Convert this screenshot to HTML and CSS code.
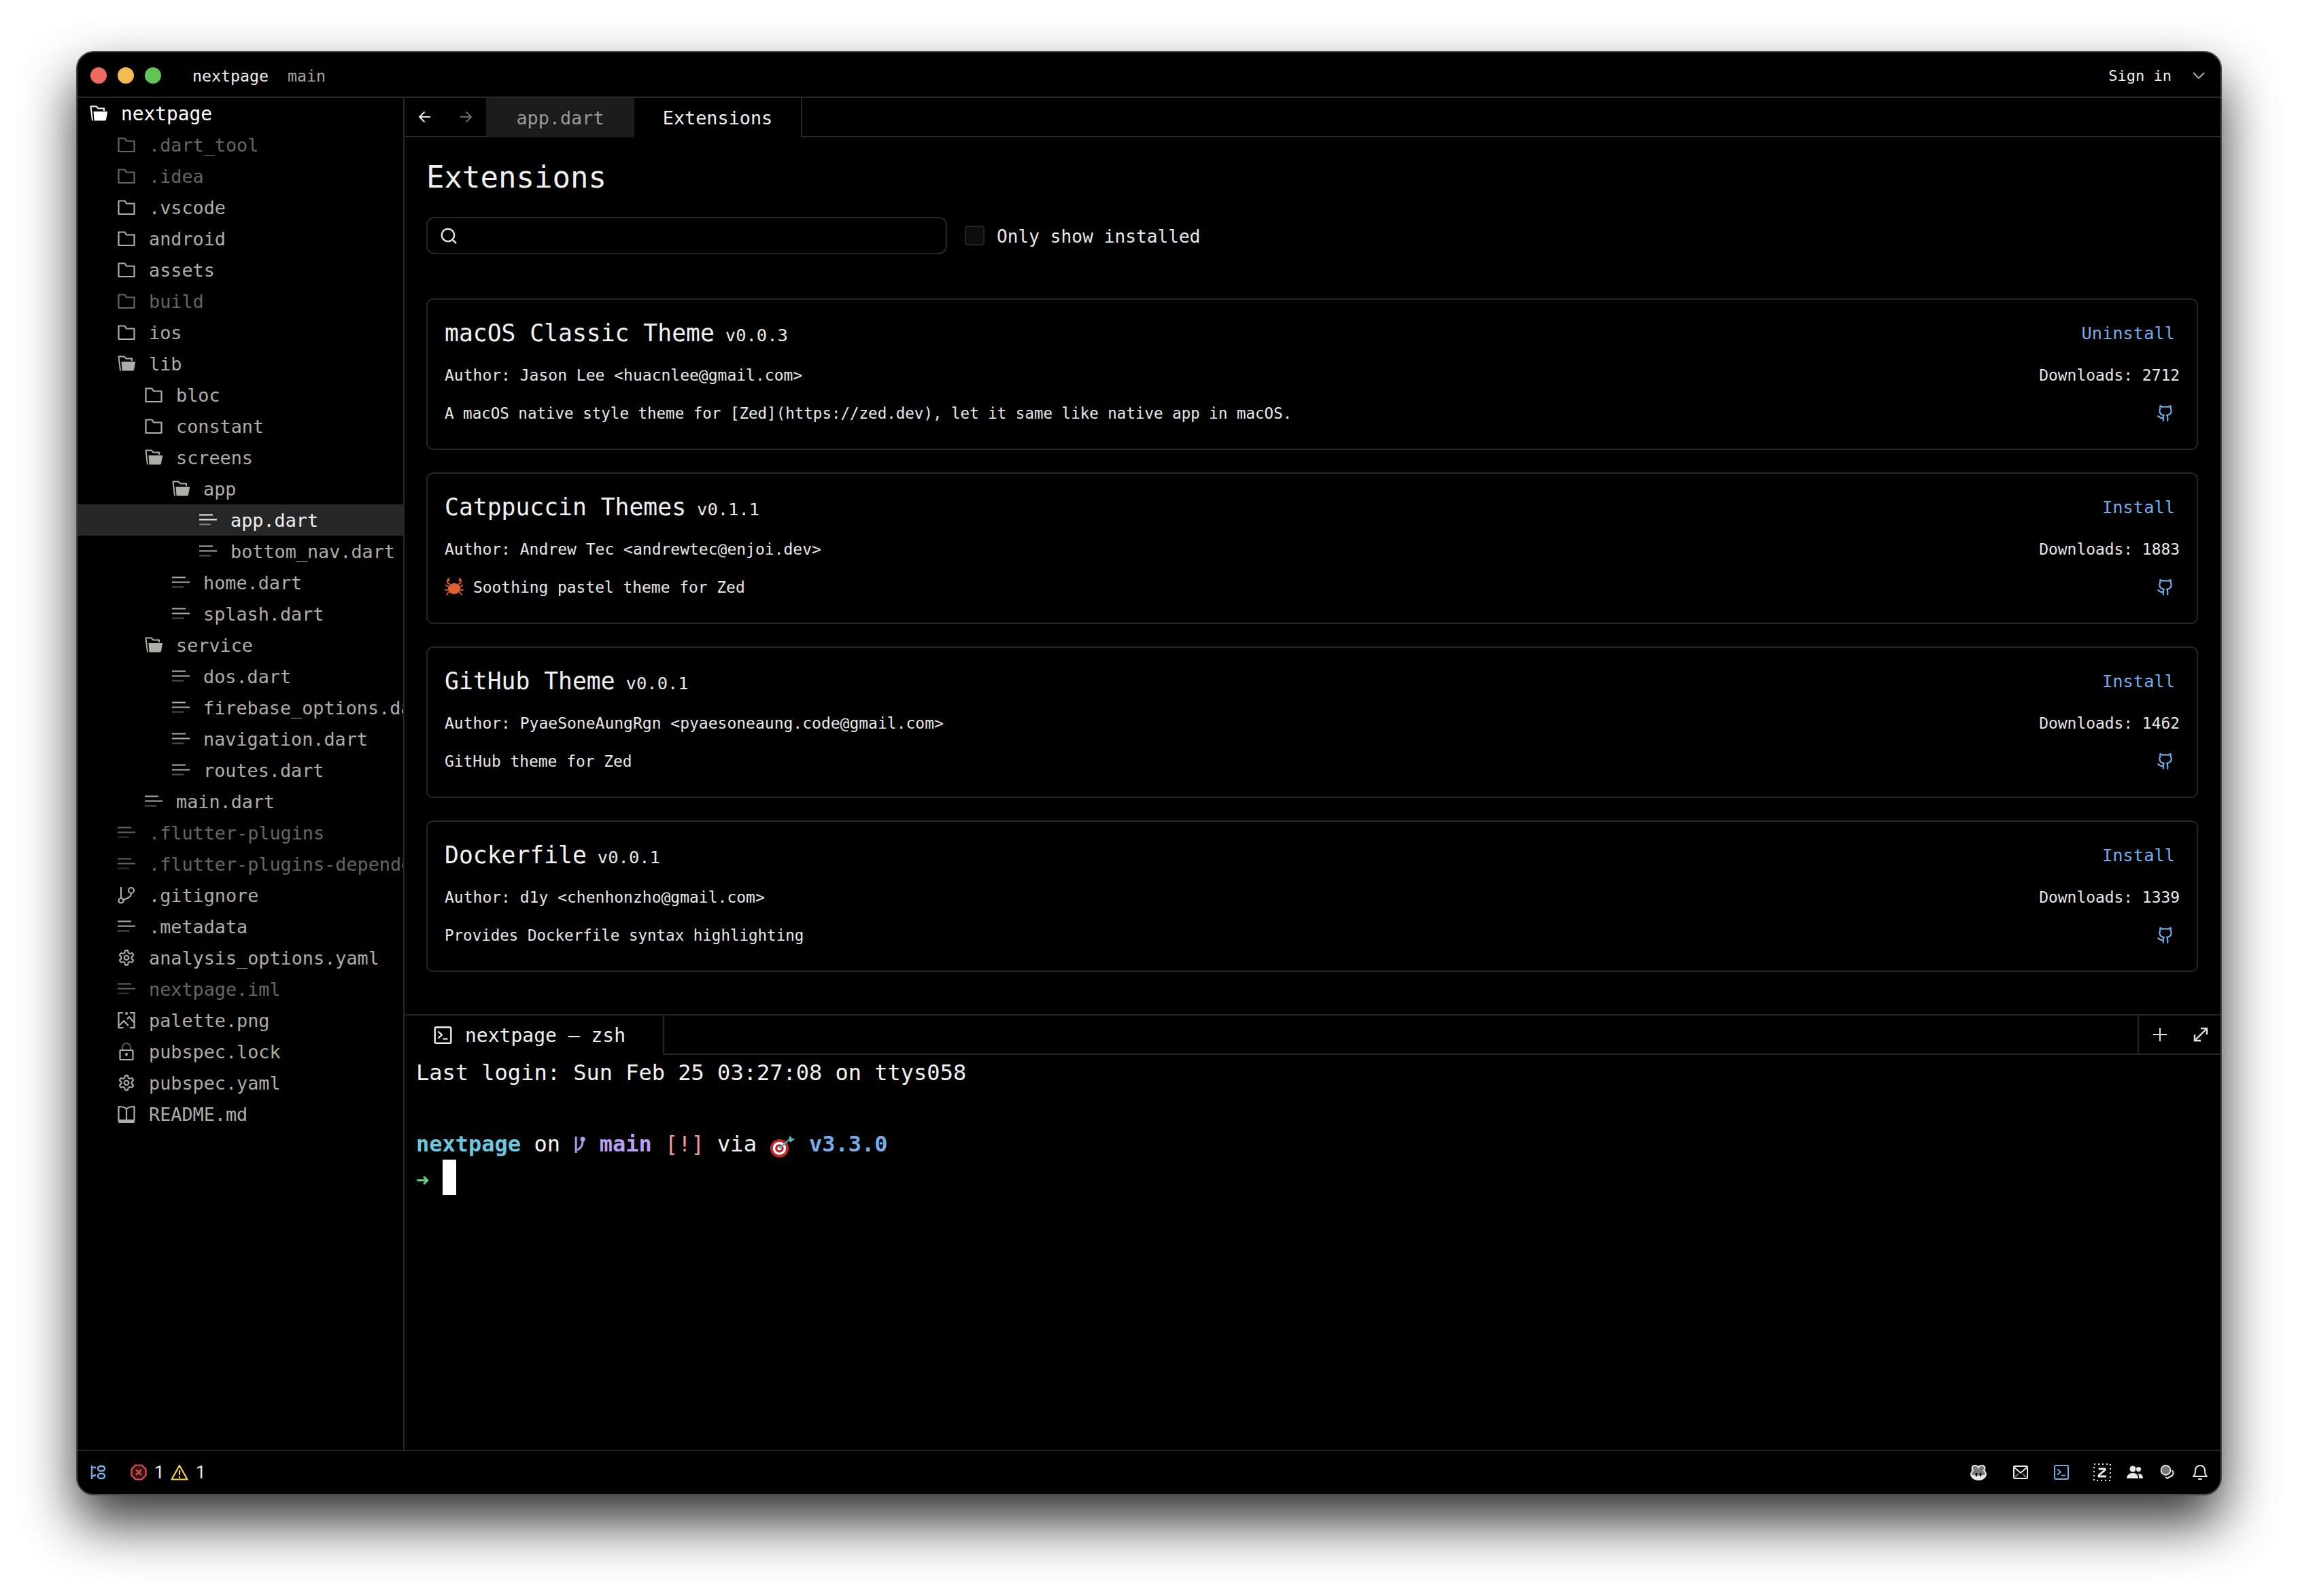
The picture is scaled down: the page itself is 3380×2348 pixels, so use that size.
FILE: index.html
```html
<!DOCTYPE html>
<html lang="en">
<head>
<meta charset="utf-8">
<title>nextpage</title>
<link rel="stylesheet" href="styles.css">
</head>
<body>
<svg class="defs" width="0" height="0" aria-hidden="true">
  <symbol id="i-folder" viewBox="0 0 26 26"><path d="M1.5 3.5h9l2.5 4h11.500v15.500H1.500z" fill="none" stroke="currentColor" stroke-width="2.200" stroke-linejoin="round"/></symbol>
  <symbol id="i-open" viewBox="0 0 26 26"><path d="M4 23.500 1.500 2.500h8l3 3h8.500v3.500" fill="none" stroke="currentColor" stroke-width="2" stroke-linejoin="round"/><path d="M5.500 10h19.500q1.500 0 1 1.500l-2 10.500q-.3 1.500-2 1.500H6.500z" fill="currentColor"/></symbol>
  <symbol id="i-file" viewBox="0 0 26 26"><path d="M0 5.500h20M0 12.500h26" fill="none" stroke="currentColor" stroke-width="2.200"/><path d="M0 19.500h17" fill="none" stroke="currentColor" stroke-opacity=".45" stroke-width="2.200"/></symbol>
  <symbol id="i-gear" viewBox="0 0 24 24"><g fill="none" stroke="currentColor" stroke-width="2" stroke-linejoin="round"><path d="M12.220 2h-.44a2 2 0 0 0-2 2v.18a2 2 0 0 1-1 1.730l-.43.25a2 2 0 0 1-2 0l-.15-.08a2 2 0 0 0-2.730.73l-.22.38a2 2 0 0 0 .73 2.730l.15.1a2 2 0 0 1 1 1.720v.51a2 2 0 0 1-1 1.740l-.15.09a2 2 0 0 0-.73 2.730l.22.38a2 2 0 0 0 2.730.73l.15-.08a2 2 0 0 1 2 0l.43.25a2 2 0 0 1 1 1.730V20a2 2 0 0 0 2 2h.44a2 2 0 0 0 2-2v-.18a2 2 0 0 1 1-1.730l.43-.25a2 2 0 0 1 2 0l.15.08a2 2 0 0 0 2.730-.73l.22-.39a2 2 0 0 0-.73-2.730l-.15-.08a2 2 0 0 1-1-1.740v-.5a2 2 0 0 1 1-1.740l.15-.09a2 2 0 0 0 .73-2.730l-.22-.38a2 2 0 0 0-2.730-.73l-.15.08a2 2 0 0 1-2 0l-.43-.25a2 2 0 0 1-1-1.730V4a2 2 0 0 0-2-2z"/><circle cx="12" cy="12" r="3"/></g></symbol>
  <symbol id="i-git" viewBox="0 0 26 26"><g fill="none" stroke="currentColor" stroke-width="2.200"><circle cx="5" cy="21" r="3.500"/><circle cx="20" cy="6" r="4"/><path d="M5 17.500V1M20 10c0 6-7 8-12 10"/></g></symbol>
  <symbol id="i-image" viewBox="0 0 26 26"><g fill="none" stroke="currentColor" stroke-width="2.200"><path d="M8 2H1.500v22h7M18 2h6.500v22H18"/><path d="M2 21l7-7 7 7M14 11l3-3 7 8"/></g><circle cx="13" cy="3" r="2" fill="currentColor"/></symbol>
  <symbol id="i-lock" viewBox="0 0 26 26"><path d="M7 11V7a6 6 0 0 1 12 0v4" fill="none" stroke="currentColor" stroke-opacity=".5" stroke-width="2.200"/><rect x="3.500" y="11" width="19" height="14" rx="1.500" fill="none" stroke="currentColor" stroke-width="2.200"/><circle cx="13" cy="17" r="2" fill="currentColor"/><path d="M13 17v3" stroke="currentColor" stroke-width="1.500"/></symbol>
  <symbol id="i-book" viewBox="0 0 26 26"><path d="M13 5.500C11 3 7 2 1.500 2v20c5 0 9 .5 11.500 2 2.500-1.500 6.500-2 11.500-2V2C19 2 15 3 13 5.500zM13 5.500V23" fill="none" stroke="currentColor" stroke-width="2.200" stroke-linejoin="round"/><path d="M1 21h24v3.500q0 1.500-1.500 1.500h-21Q1 26 1 24.500z" fill="currentColor"/></symbol>
  <symbol id="i-gh" viewBox="0 0 24 24"><g fill="none" stroke="currentColor" stroke-width="2" stroke-linecap="round" stroke-linejoin="round"><path d="M15 22v-4a4.800 4.800 0 0 0-1-3.500c3 0 6-2 6-5.500.08-1.250-.27-2.480-1-3.500.28-1.150.28-2.350 0-3.500 0 0-1 0-3 1.500-2.640-.5-5.360-.5-8 0C6 2 5 2 5 2c-.3 1.150-.3 2.350 0 3.500A5.403 5.403 0 0 0 4 9c0 3.500 3 5.500 6 5.500-.39.49-.68 1.050-.85 1.650-.17.6-.22 1.230-.15 1.850v4"/><path d="M9 18c-4.510 2-5-2-7-2"/></g></symbol>
  <symbol id="i-term" viewBox="0 0 26 26"><rect x="1.200" y="1.200" width="23.600" height="23.600" rx="2" fill="none" stroke="currentColor" stroke-width="2.400"/><path d="M6 7.500l5.500 5-5.500 5" fill="none" stroke="currentColor" stroke-width="2.200"/><path d="M13 18.500h7" stroke="currentColor" stroke-width="2.200"/></symbol>
</svg>

<div class="window">
  <header class="titlebar">
    <span class="dot dot-red"></span><span class="dot dot-yellow"></span><span class="dot dot-green"></span>
    <span class="project">nextpage</span><span class="branch">main</span>
    <span class="signin">Sign in</span>
    <svg class="chevron" viewBox="0 0 18 10"><path d="M1 1l8 8 8-8" fill="none" stroke="currentColor" stroke-width="2"/></svg>
  </header>

  <div class="body">
    <nav class="sidebar">
      <div class="row root l0"><svg class="ico"><use href="#i-open"/></svg>nextpage</div>
      <div class="row dim l1"><svg class="ico"><use href="#i-folder"/></svg>.dart_tool</div>
      <div class="row dim l1"><svg class="ico"><use href="#i-folder"/></svg>.idea</div>
      <div class="row l1"><svg class="ico"><use href="#i-folder"/></svg>.vscode</div>
      <div class="row l1"><svg class="ico"><use href="#i-folder"/></svg>android</div>
      <div class="row l1"><svg class="ico"><use href="#i-folder"/></svg>assets</div>
      <div class="row dim l1"><svg class="ico"><use href="#i-folder"/></svg>build</div>
      <div class="row l1"><svg class="ico"><use href="#i-folder"/></svg>ios</div>
      <div class="row l1"><svg class="ico"><use href="#i-open"/></svg>lib</div>
      <div class="row l2"><svg class="ico"><use href="#i-folder"/></svg>bloc</div>
      <div class="row l2"><svg class="ico"><use href="#i-folder"/></svg>constant</div>
      <div class="row l2"><svg class="ico"><use href="#i-open"/></svg>screens</div>
      <div class="row l3"><svg class="ico"><use href="#i-open"/></svg>app</div>
      <div class="row selected l4"><svg class="ico"><use href="#i-file"/></svg>app.dart</div>
      <div class="row l4"><svg class="ico"><use href="#i-file"/></svg>bottom_nav.dart</div>
      <div class="row l3"><svg class="ico"><use href="#i-file"/></svg>home.dart</div>
      <div class="row l3"><svg class="ico"><use href="#i-file"/></svg>splash.dart</div>
      <div class="row l2"><svg class="ico"><use href="#i-open"/></svg>service</div>
      <div class="row l3"><svg class="ico"><use href="#i-file"/></svg>dos.dart</div>
      <div class="row l3"><svg class="ico"><use href="#i-file"/></svg>firebase_options.dart</div>
      <div class="row l3"><svg class="ico"><use href="#i-file"/></svg>navigation.dart</div>
      <div class="row l3"><svg class="ico"><use href="#i-file"/></svg>routes.dart</div>
      <div class="row l2"><svg class="ico"><use href="#i-file"/></svg>main.dart</div>
      <div class="row dim l1"><svg class="ico"><use href="#i-file"/></svg>.flutter-plugins</div>
      <div class="row dim l1"><svg class="ico"><use href="#i-file"/></svg>.flutter-plugins-dependencies</div>
      <div class="row l1"><svg class="ico"><use href="#i-git"/></svg>.gitignore</div>
      <div class="row l1"><svg class="ico"><use href="#i-file"/></svg>.metadata</div>
      <div class="row l1"><svg class="ico"><use href="#i-gear"/></svg>analysis_options.yaml</div>
      <div class="row dim l1"><svg class="ico"><use href="#i-file"/></svg>nextpage.iml</div>
      <div class="row l1"><svg class="ico"><use href="#i-image"/></svg>palette.png</div>
      <div class="row l1"><svg class="ico"><use href="#i-lock"/></svg>pubspec.lock</div>
      <div class="row l1"><svg class="ico"><use href="#i-gear"/></svg>pubspec.yaml</div>
      <div class="row l1"><svg class="ico"><use href="#i-book"/></svg>README.md</div>
    </nav>

    <main class="main">
      <div class="tabbar">
        <div class="nav">
          <svg class="arrow" viewBox="0 0 20 20"><path d="M18 10H2M9.500 2.500 2 10l7.500 7.500" fill="none" stroke="currentColor" stroke-width="2"/></svg>
          <svg class="arrow arrow-off" viewBox="0 0 20 20"><path d="M2 10h16M10.500 2.500 18 10l-7.500 7.500" fill="none" stroke="currentColor" stroke-width="2"/></svg>
        </div>
        <div class="tab tab-idle">app.dart</div>
        <div class="tab tab-active">Extensions</div>
      </div>

      <section class="extensions">
        <h1 class="ext-title">Extensions</h1>
        <div class="filters">
          <div class="search">
            <svg class="search-ico" viewBox="0 0 24 24"><circle cx="11" cy="11" r="8.500" fill="none" stroke="currentColor" stroke-width="2.200"/><path d="M17.500 17.500 22 22" stroke="currentColor" stroke-width="2.200"/></svg>
          </div>
          <span class="checkbox"></span>
          <span class="check-label">Only show installed</span>
        </div>

        <div class="cards">
          <article class="card">
            <div class="card-row card-head"><div class="name-group"><span class="name">macOS Classic Theme</span><span class="version">v0.0.3</span></div><span class="action">Uninstall</span></div>
            <div class="card-row"><span class="author">Author: Jason Lee &lt;huacnlee@gmail.com&gt;</span><span>Downloads: 2712</span></div>
            <div class="card-row"><span class="desc-tight">A macOS native style theme for [Zed](https://zed.dev), let it same like native app in macOS.</span><svg class="gh"><use href="#i-gh"/></svg></div>
          </article>
          <article class="card">
            <div class="card-row card-head"><div class="name-group"><span class="name">Catppuccin Themes</span><span class="version">v0.1.1</span></div><span class="action">Install</span></div>
            <div class="card-row"><span class="author">Author: Andrew Tec &lt;andrewtec@enjoi.dev&gt;</span><span>Downloads: 1883</span></div>
            <div class="card-row"><span class="desc-emoji"><svg class="crab" viewBox="0 0 28 28"><g fill="none" stroke="#d2552a" stroke-width="2" stroke-linecap="round"><path d="M6 14 2 11M5 18l-4 0M6 21l-3 4M22 14l4-3M23 18h4M22 21l3 4M7 9C3 8 3 3 6 1M21 9c4-1 4-6 1-8"/></g><ellipse cx="14" cy="16" rx="9" ry="8" fill="#e2622e"/><path d="M6 1 8 5 3 5zM22 1l-2 4 5 0z" fill="#e2622e"/></svg><span>Soothing pastel theme for Zed</span></span><svg class="gh"><use href="#i-gh"/></svg></div>
          </article>
          <article class="card">
            <div class="card-row card-head"><div class="name-group"><span class="name">GitHub Theme</span><span class="version">v0.0.1</span></div><span class="action">Install</span></div>
            <div class="card-row"><span class="author">Author: PyaeSoneAungRgn &lt;pyaesoneaung.code@gmail.com&gt;</span><span>Downloads: 1462</span></div>
            <div class="card-row"><span>GitHub theme for Zed</span><svg class="gh"><use href="#i-gh"/></svg></div>
          </article>
          <article class="card">
            <div class="card-row card-head"><div class="name-group"><span class="name">Dockerfile</span><span class="version">v0.0.1</span></div><span class="action">Install</span></div>
            <div class="card-row"><span class="author">Author: d1y &lt;chenhonzho@gmail.com&gt;</span><span>Downloads: 1339</span></div>
            <div class="card-row"><span class="desc-tight">Provides Dockerfile syntax highlighting</span><svg class="gh"><use href="#i-gh"/></svg></div>
          </article>
        </div>
      </section>

      <section class="panel">
        <div class="panel-bar">
          <div class="term-tab"><svg class="term-ico"><use href="#i-term"/></svg>nextpage — zsh</div>
          <div class="panel-fill"></div>
          <div class="panel-tools">
            <svg class="tool" viewBox="0 0 20 20"><path d="M10 0v20M0 10h20" stroke="currentColor" stroke-width="2"/></svg>
            <svg class="tool" viewBox="0 0 24 24"><path d="M3 21 21 3M12 3h9v9M3 12v9h9" fill="none" stroke="currentColor" stroke-width="2.400"/></svg>
          </div>
        </div>
        <div class="terminal">
          <div class="tline">Last login: Sun Feb 25 03:27:08 on ttys058</div>
          <div class="tline"></div>
          <div class="tline"><b class="c-cyan">nextpage</b> on <svg class="term-branch" viewBox="0 0 19 30"><path d="M4 2v24M14 7c0 9-3 12-8 15" fill="none" stroke="currentColor" stroke-width="3"/><circle cx="14" cy="6" r="3.500" fill="currentColor"/></svg> <b class="c-purple">main</b> <span class="c-red">[!]</span> via <svg class="dart" viewBox="0 0 40 36"><circle cx="15" cy="21" r="14" fill="#c0282d"/><circle cx="15" cy="21" r="10" fill="#fff"/><circle cx="15" cy="21" r="6.500" fill="#c0282d"/><circle cx="15" cy="21" r="3" fill="#fff"/><path d="M15 21 32 6" stroke="#4aa6b5" stroke-width="2.500"/><path d="M29 9l2-8 3 5 5 0-7 6z" fill="#56b6c2"/></svg> <b class="c-blue">v3.3.0</b></div>
          <div class="tline tline-prompt"><span class="c-green">➜</span> <span class="cursor"></span></div>
        </div>
      </section>
    </main>
  </div>

  <footer class="statusbar">
    <svg class="st-tree" viewBox="0 0 22 22"><g fill="none" stroke="currentColor" stroke-width="2.400"><path d="M2 1v20M2 4h6M2 17l6-2"/><rect x="11" y="2" width="10" height="7" rx="3.500"/><rect x="11" y="13" width="10" height="7" rx="3.500"/></g></svg>
    <svg class="st-err" viewBox="0 0 24 24"><path d="M7.500 1.500h9l6 6v9l-6 6h-9l-6-6v-9z" fill="#3a1214" stroke="#e05252" stroke-width="2.200" stroke-linejoin="round"/><path d="M8 8l8 8M16 8l-8 8" stroke="#e05252" stroke-width="2.200"/></svg>
    <span class="st-num">1</span>
    <svg class="st-warn" viewBox="0 0 26 24"><path d="M13 2 24.500 22.500h-23z" fill="none" stroke="#f5d547" stroke-width="2.200" stroke-linejoin="round"/><path d="M13 9v7M13 18v2.500" stroke="#f5d547" stroke-width="2.200"/></svg>
    <span class="st-num">1</span>
    <span class="st-fill"></span>
    <svg class="st-ico st-copilot" viewBox="0 0 26 24"><g fill="none" stroke="#e8e8e8" stroke-width="2"><path d="M5 9a4 4 0 0 1 3-7c2.500 0 4 1 5 3 1-2 2.500-3 5-3a4 4 0 0 1 3 7c2 2 3 4 3 7-2 5-7 7-11 7S4 21 2 16c0-3 1-5 3-7z" fill="#777"/></g><path d="M2 15c5 2 17 2 22 0v2c-3 5-7 6-11 6s-8-1-11-6z" fill="#e8e8e8"/><path d="M10 13v5M16 13v5" stroke="#000" stroke-width="2.400"/></svg>
    <svg class="st-ico st-mail" viewBox="0 0 22 20"><rect x="1" y="1" width="20" height="18" rx="1.500" fill="none" stroke="#e8e8e8" stroke-width="2"/><path d="M2 3l9 8 9-8" fill="none" stroke="#e8e8e8" stroke-width="2"/><path d="M3 17l5-5M19 17l-5-5" stroke="#777" stroke-width="2"/></svg>
    <svg class="st-ico st-term"><use href="#i-term"/></svg>
    <svg class="st-ico st-zed" viewBox="0 0 28 26"><path d="M9 7h10v3L10 18h9.500v2H8v-3l9-8H9z" fill="#e8e8e8" stroke="#e8e8e8"/><path d="M2 1h24v24H2z" fill="none" stroke="#e8e8e8" stroke-width="2" stroke-dasharray="2 4"/></svg>
    <svg class="st-ico st-people" viewBox="0 0 24 20"><circle cx="9" cy="5" r="4.500" fill="#e8e8e8"/><circle cx="17.500" cy="5.500" r="3.500" fill="#e8e8e8"/><path d="M0 19c0-5 4-8 9-8s8 3 8 8z" fill="#e8e8e8"/><path d="M18 19h6c0-4-2-7-7-7 1 2 1 4 1 7z" fill="#e8e8e8"/></svg>
    <svg class="st-ico st-chat" viewBox="0 0 22 24"><circle cx="8.500" cy="9" r="7" fill="#777" stroke="#e8e8e8" stroke-width="1.800"/><path d="M18 9c3 4 1 8-2 9-2 1-3 1-5 3l-3-2" fill="none" stroke="#e8e8e8" stroke-width="2"/></svg>
    <svg class="st-ico st-bell" viewBox="0 0 24 24"><path d="M2 18c2-2 3-3 3-9a7 7 0 0 1 14 0c0 6 1 7 3 9z" fill="none" stroke="#e8e8e8" stroke-width="2" stroke-linejoin="round"/><path d="M10 22h4" stroke="#e8e8e8" stroke-width="2" stroke-linecap="round"/></svg>
  </footer>
</div>
</body>
</html>
```

FILE: styles.css
```css
* { box-sizing: border-box; }
html, body { margin: 0; padding: 0; }
body {
  background: #fff;
  width: 3380px;
  height: 2348px;
  padding: 75px 112px 148px;
  overflow: hidden;
  font-family: "DejaVu Sans Mono", "Liberation Mono", monospace;
}
.defs { position: absolute; }

.window {
  height: 2125px;
  background: #000;
  border: 2px solid #4a4a4a;
  border-radius: 26px;
  box-shadow: 0 40px 80px rgba(0, 0, 0, .8);
  display: flex;
  flex-direction: column;
  overflow: hidden;
  color: #e8e8e8;
}

/* title bar */
.titlebar {
  height: 67px;
  flex: none;
  display: flex;
  align-items: center;
  padding: 3px 23px 0 19px;
  border-bottom: 2px solid #262626;
  font-size: 23.250px;
}
.dot { width: 24px; height: 24px; border-radius: 50%; margin-right: 16px; }
.dot-red { background: #ee6a5f; }
.dot-yellow { background: #f5bd4f; }
.dot-green { background: #61c454; }
.project { margin-left: 30px; color: #ececec; }
.branch { margin-left: 28px; color: #a3a3a0; }
.signin { margin-left: auto; font-size: 22px; color: #ececec; }
.chevron { width: 18px; height: 10px; margin-left: 31px; color: #aaa9a3; }

.body { flex: 1; display: flex; min-height: 0; }

/* project tree */
.sidebar {
  width: 481px;
  flex: none;
  border-right: 2px solid #262626;
  overflow: hidden;
  font-size: 26.800px;
  color: #aeada7;
}
.row {
  height: 46px;
  display: flex;
  align-items: center;
  gap: 20px;
  white-space: nowrap;
}
.ico { width: 26px; height: 26px; flex: none; }
.l0 { padding-left: 18px; }
.l1 { padding-left: 59px; }
.l2 { padding-left: 99px; }
.l3 { padding-left: 139px; }
.l4 { padding-left: 179px; }
.root { color: #fff; font-size: 27.800px; }
.dim { color: #666660; }
.selected { background: #262626; color: #f0f0f0; }

/* main column */
.main { flex: 1; min-width: 0; display: flex; flex-direction: column; }
.tabbar {
  height: 58px;
  flex: none;
  display: flex;
  border-bottom: 2px solid #262626;
  font-size: 26.800px;
}
.nav {
  width: 120px;
  display: flex;
  align-items: center;
  gap: 40px;
  padding-left: 20px;
}
.arrow { width: 20px; height: 20px; color: #e8e8e8; }
.arrow-off { color: #6d6d68; }
.tab { display: flex; align-items: center; justify-content: center; height: 58px; }
.tab-idle { width: 218px; background: #1c1c1c; color: #9a9a96; }
.tab-active { width: 247px; background: #000; color: #f0f0f0; border-right: 2px solid #262626; }

/* extensions page */
.extensions { flex: 1; min-height: 0; padding: 0 33px 0 32px; }
.ext-title {
  margin: 29px 0 28px;
  font-size: 44px;
  line-height: 60px;
  font-weight: 400;
  color: #f0f0f0;
}
.filters { display: flex; align-items: center; height: 55px; }
.search {
  width: 766px;
  height: 55px;
  border: 2px solid #262626;
  border-radius: 12px;
  display: flex;
  align-items: center;
  padding-left: 18px;
}
.search-ico { width: 26px; height: 26px; color: #e8e8e8; }
.checkbox {
  width: 29px;
  height: 29px;
  margin-left: 26px;
  border: 2px solid #262626;
  border-radius: 4px;
  background: #0c0c0c;
}
.check-label { margin: 2px 0 0 18px; font-size: 26.200px; color: #e8e8e8; }

.cards { margin-top: 65px; display: flex; flex-direction: column; gap: 33px; }
.card {
  height: 223px;
  border: 2px solid #262626;
  border-radius: 10px;
  padding: 29px 25px 0;
  display: flex;
  flex-direction: column;
  gap: 28px;
  font-size: 22.900px;
  color: #e8e8e8;
}
.card-row {
  height: 28px;
  display: flex;
  align-items: center;
  justify-content: space-between;
  white-space: nowrap;
}
.card-head { height: 40px; }
.name-group { display: flex; align-items: baseline; gap: 16px; }
.name { font-size: 34.700px; color: #f2f2f2; }
.version { font-size: 25.500px; color: #e8e8e8; }
.action { font-size: 25.400px; color: #74ade8; margin-right: 7px; }
.author { font-size: 23px; }
.desc-tight { font-size: 22.500px; }
.gh { width: 26px; height: 26px; color: #74ade8; margin-right: 8px; }
.desc-emoji { display: flex; align-items: center; gap: 14px; }
.crab { width: 28px; height: 28px; }

/* terminal panel */
.panel {
  height: 641px;
  flex: none;
  border-top: 2px solid #262626;
  display: flex;
  flex-direction: column;
}
.panel-bar { height: 58px; flex: none; display: flex; font-size: 28px; }
.term-tab {
  width: 382px;
  display: flex;
  align-items: center;
  gap: 19px;
  padding-left: 43px;
  border-right: 2px solid #262626;
  color: #f0f0f0;
  white-space: nowrap;
}
.term-ico { width: 27px; height: 26px; color: #f0f0f0; }
.panel-fill { flex: 1; border-bottom: 2px solid #262626; }
.panel-tools {
  width: 122px;
  display: flex;
  align-items: center;
  gap: 38px;
  padding-left: 21px;
  border-left: 2px solid #262626;
  border-bottom: 2px solid #262626;
  color: #e0e0e0;
}
.tool { width: 20px; height: 20px; }
.tool + .tool { width: 24px; height: 24px; }
.terminal {
  flex: 1;
  padding-left: 17px;
  font-size: 32px;
  color: #f2f2f2;
}
.tline { height: 52.500px; line-height: 52.500px; white-space: pre; }
.tline-prompt { margin-top: -4px; }
.c-cyan { color: #6bc6de; }
.c-purple { color: #b8a1f0; }
.c-red { color: #f09a98; }
.c-blue { color: #74ade8; }
.c-green { color: #5fd38d; font-weight: 700; }
.term-branch { display: inline-block; width: 19.260px; height: 30px; vertical-align: -6px; color: #b39df0; }
.dart { display: inline-block; width: 38.520px; height: 35px; vertical-align: -10px; }
.cursor { display: inline-block; width: 20px; height: 52px; vertical-align: -11px; background: #fff; }

/* status bar */
.statusbar {
  height: 65px;
  flex: none;
  border-top: 2px solid #262626;
  display: flex;
  align-items: center;
  padding: 0 18px 2px 19px;
  font-size: 24px;
  color: #e8e8e8;
}
.st-tree { width: 22px; height: 22px; color: #74ade8; }
.st-err { width: 24px; height: 24px; margin-left: 37px; }
.st-num { margin: 0 10px 0 11px; width: 14px; font-family: Roboto, "Liberation Sans", sans-serif; font-size: 26px; }
.st-warn { width: 26px; height: 24px; }
.st-fill { flex: 1; }
.st-ico { flex: none; }
.st-copilot { width: 26px; height: 24px; margin-right: 38px; }
.st-mail { width: 22px; height: 20px; margin-right: 38px; }
.st-term { width: 22px; height: 22px; margin-right: 35px; color: #74ade8; }
.st-zed { width: 28px; height: 26px; margin-right: 22px; }
.st-people { width: 24px; height: 20px; margin-right: 25px; }
.st-chat { width: 22px; height: 24px; margin-right: 25px; }
.st-bell { width: 24px; height: 24px; }
```
